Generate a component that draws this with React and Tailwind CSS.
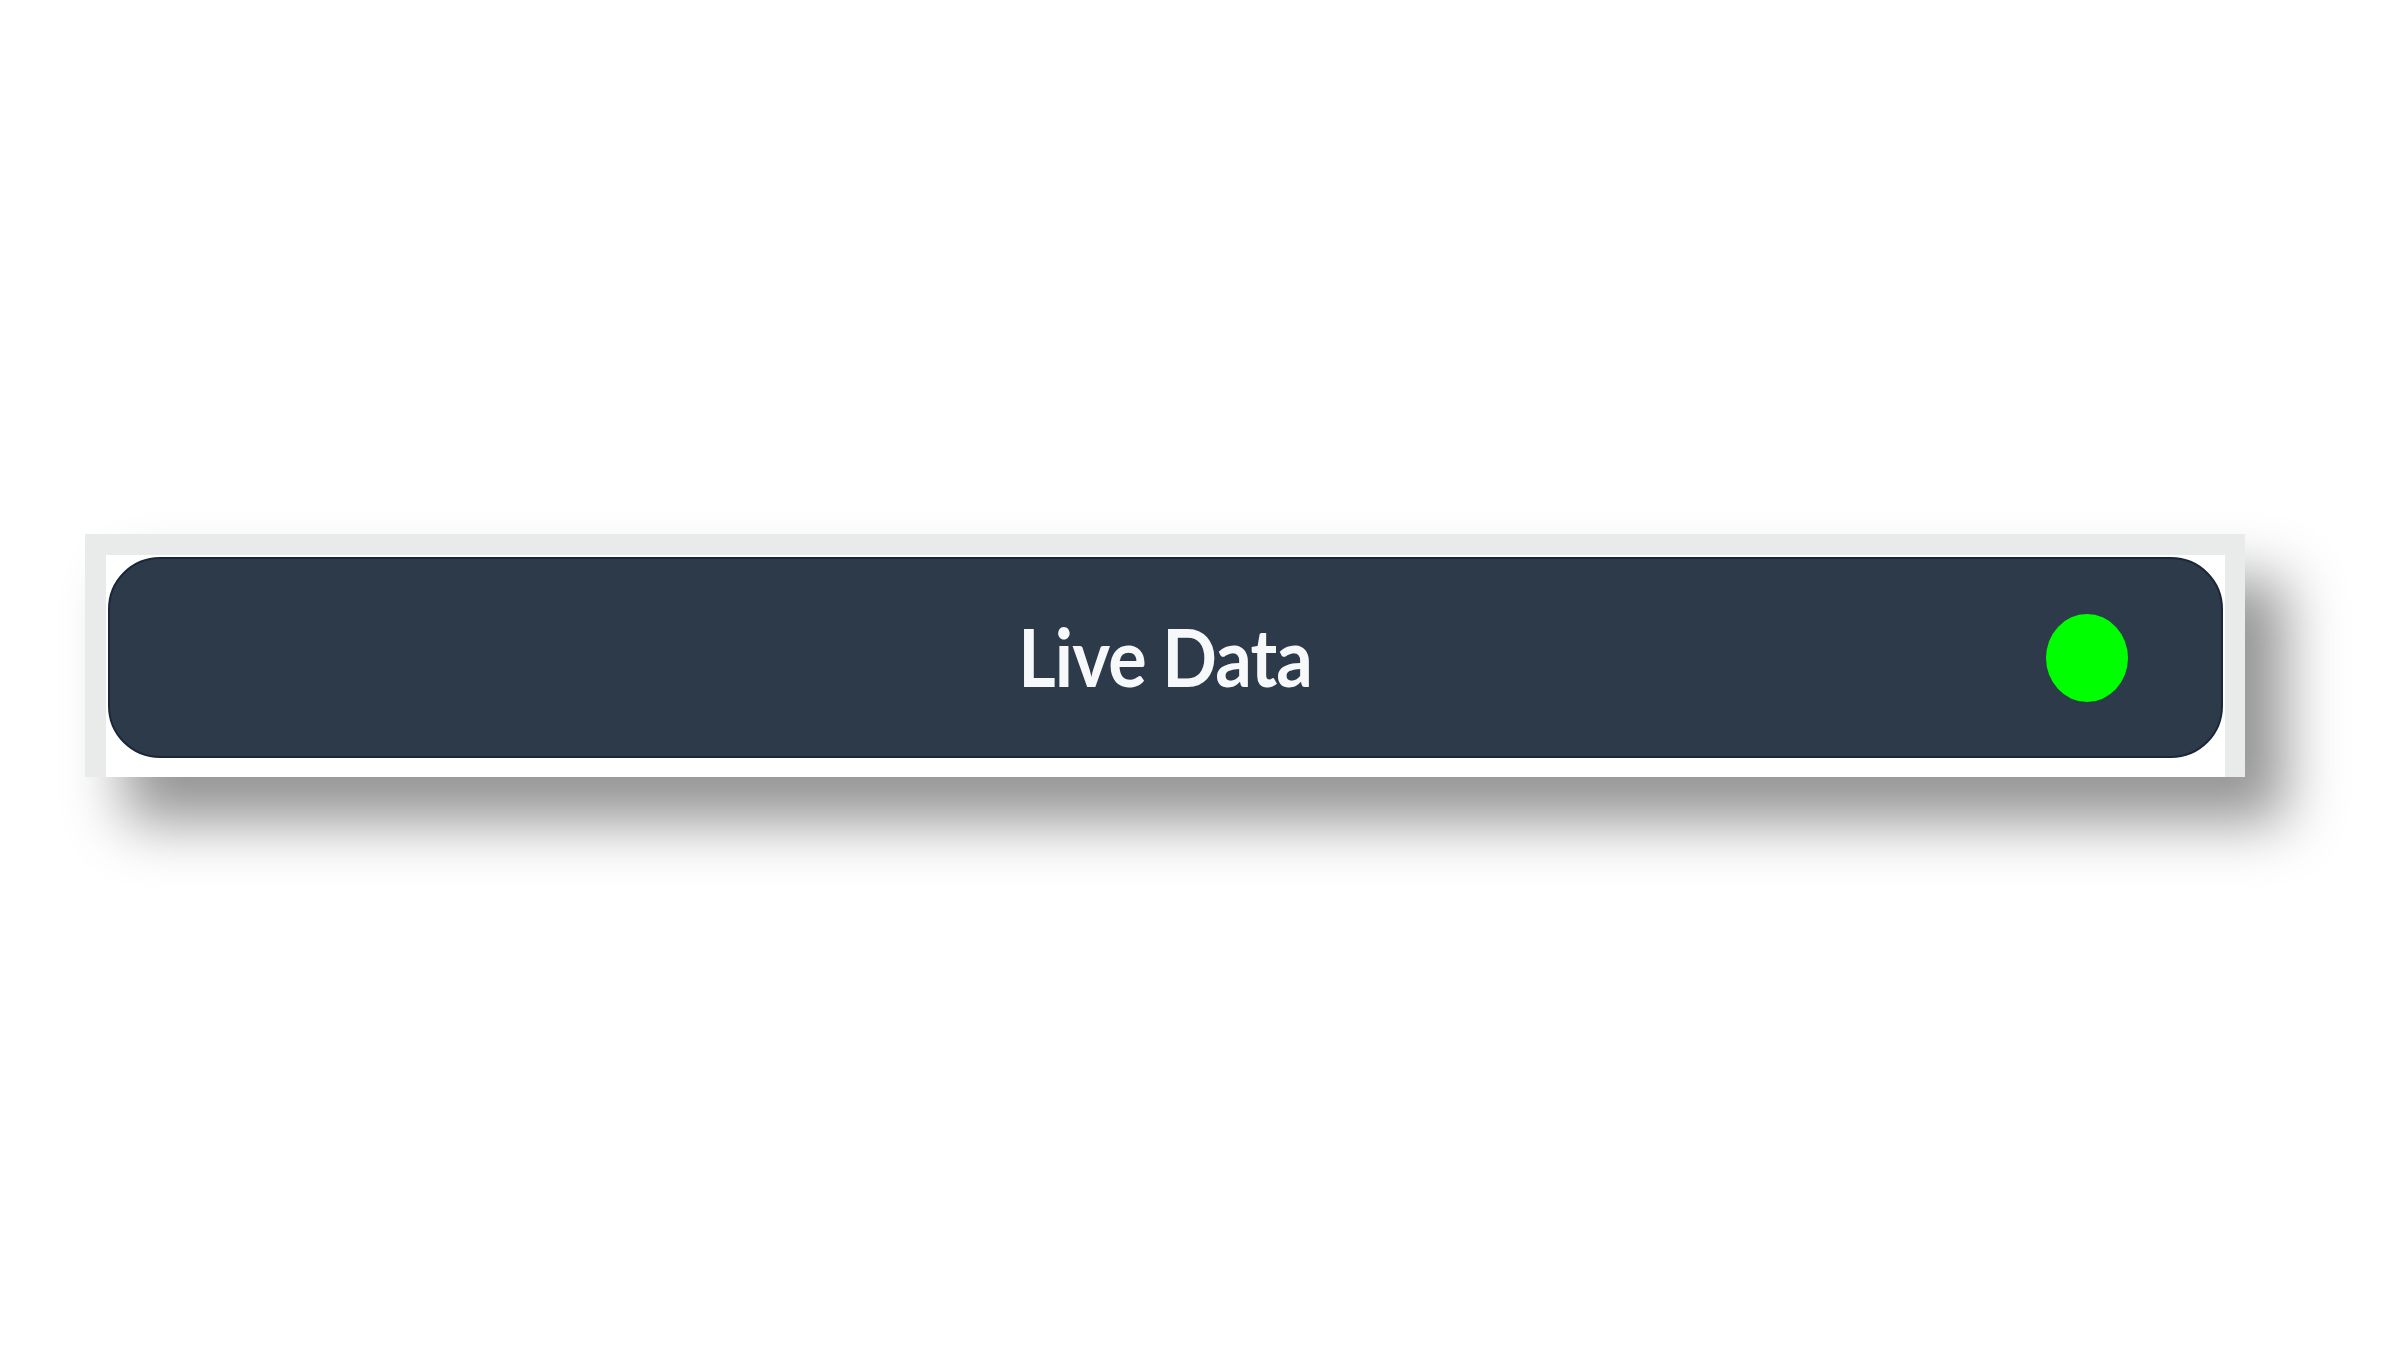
import React from 'react';

const LiveDataBar = ({ label, online }) => {
  return (
    <div className="w-[2160px] bg-[#e9ebea] pl-[21px] pt-[21px] pr-[20px] shadow-[40px_45px_55px_rgba(0,0,0,0.42)]">
      <div className="bg-white pl-[2px] pt-[2px] pr-[2px] pb-[19px]">
        <div className="h-[201px] rounded-[52px] bg-[#2c3a4a] border-2 border-[#1b2738] relative flex items-center justify-center">
          <span
            className="text-[80px] font-bold tracking-[-1px] text-[#f7f8f9] leading-none scale-x-[0.9] pb-[4px]"
            style={{ fontFamily: 'Lato, "Open Sans", sans-serif' }}
          >
            {label}
          </span>
          <div
            className={`absolute right-[93px] top-1/2 -translate-y-1/2 w-[82px] h-[88px] rounded-[50%] ${
              online ? 'bg-[#00ff00]' : 'bg-[#ff2222]'
            }`}
          />
        </div>
      </div>
    </div>
  );
};

export default function App() {
  return (
    <div className="w-[2400px] h-[1350px] bg-white overflow-hidden pt-[534px] pl-[85px]">
      <LiveDataBar label="Live Data" online />
    </div>
  );
}
